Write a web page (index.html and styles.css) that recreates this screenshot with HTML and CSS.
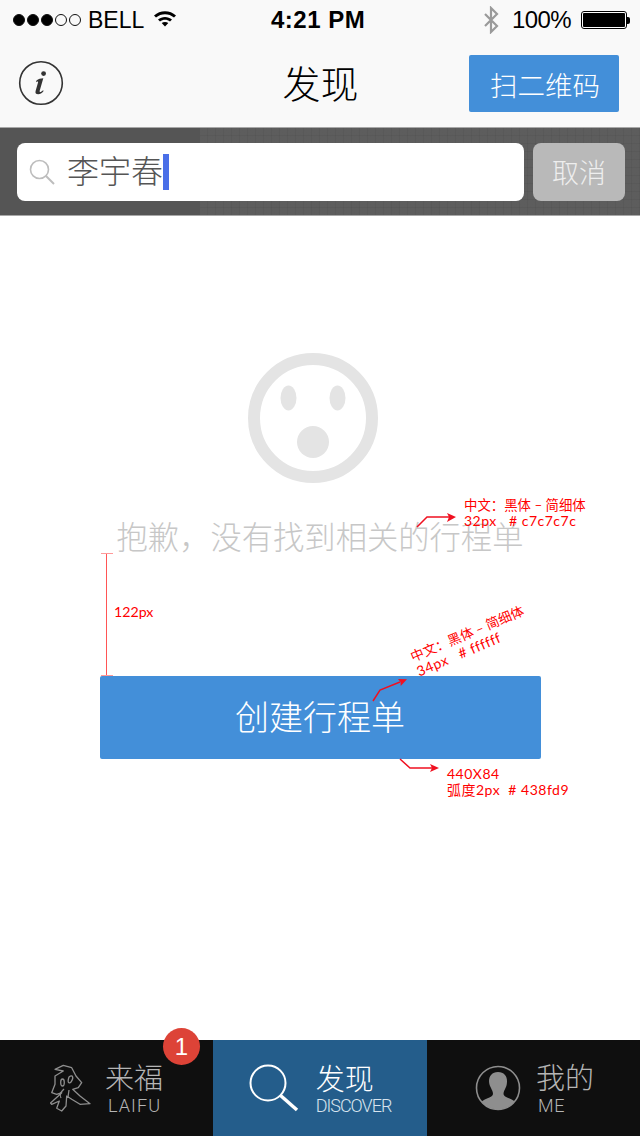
FILE: index.html
```html
<!DOCTYPE html>
<html lang="zh">
<head>
<meta charset="utf-8">
<title>发现</title>
<link rel="stylesheet" href="styles.css">
</head>
<body>
<div class="app">
  <header class="top">
    <div class="status">
      <div class="status-left">
        <span class="signal"><i class="on"></i><i class="on"></i><i class="on"></i><i></i><i></i></span>
        <span class="carrier">BELL</span>
        <svg class="wifi" width="24" height="18" viewBox="0 0 24 18"><path d="M1 6.5C7 .8 17 .8 23 6.5L21 8.6C16 4 8 4 3 8.6Z"/><path d="M5 10.5C9 7 15 7 19 10.5L17 12.5C14 10 10 10 7 12.5Z"/><path d="M8.7 14C10.6 12.6 13.4 12.6 15.3 14L12 17.6Z"/></svg>
      </div>
      <div class="time">4:21 PM</div>
      <div class="status-right">
        <svg class="bt" width="16" height="28" viewBox="0 0 16 28"><path d="M2 8l12 12-6 6V2l6 6L2 20" fill="none" stroke="#9a9a9a" stroke-width="2.2"/></svg>
        <span class="pct">100%</span>
        <span class="battery"><span class="battery-fill"></span></span><span class="battery-tip"></span>
      </div>
    </div>
    <nav class="nav">
      <svg class="info" width="46" height="46" viewBox="0 0 46 46"><circle cx="23" cy="23" r="21.3" fill="none" stroke="#333" stroke-width="1.6"/><circle cx="25.6" cy="13.6" r="2.4" fill="#333"/><path d="M18.5 20.5c2-1.6 4-2.3 6.8-2.3l-3.6 12.6c-.3 1.2.6 1.5 1.4 1l2-1.5.5.8c-1.7 2.2-3.5 3.2-5.4 3.2-2.2 0-3.2-1.2-2.6-3.3l2.5-8.7c.2-.8-.5-1-1.2-.6l-.9.6z" fill="#333"/></svg>
      <h1 class="title">发现</h1>
      <button class="scan">扫二维码</button>
    </nav>
  </header>

  <div class="searchbar">
    <div class="searchbox">
      <svg class="search-ico" width="26" height="26" viewBox="0 0 26 26"><circle cx="10.5" cy="10.5" r="9" fill="none" stroke="#bdbdbd" stroke-width="1.6"/><path d="M17 17l8 8" stroke="#bdbdbd" stroke-width="2"/></svg>
      <span class="query">李宇春</span><span class="caret"></span>
    </div>
    <button class="cancel">取消</button>
  </div>

  <main class="main">
    <svg class="face" width="130" height="130" viewBox="0 0 130 130"><circle cx="65" cy="65" r="59" fill="none" stroke="#e4e4e4" stroke-width="12"/><ellipse cx="40.500" cy="45" rx="8" ry="12.500" fill="#e4e4e4"/><ellipse cx="89.500" cy="45" rx="8" ry="12.500" fill="#e4e4e4"/><circle cx="65" cy="89" r="16" fill="#e4e4e4"/></svg>
    <p class="empty">抱歉，没有找到相关的行程单</p>
    <button class="create">创建行程单</button>

    <div class="ruler"></div>
    <span class="note note-122">122px</span>

    <svg class="arrows" width="640" height="824" viewBox="0 0 640 824">
      <g fill="none" stroke="#f01020" stroke-width="1.500">
        <path d="M417 311l10-10h22"/>
        <path d="M373 485l7-11 20-8"/>
        <path d="M400 543l10 9h22"/>
      </g>
      <g fill="#f01020">
        <path d="M456 301l-9-4 2 4-2 5z"/>
        <path d="M407 463.300l-9-.3 2.500 3 .2 4z"/>
        <path d="M439 552l-9-4 2 4-2 4z"/>
      </g>
    </svg>
    <div class="note note-a"><span>中文：黑体 – 简细体</span><span class="wide">32px &nbsp;&nbsp;# c7c7c7c</span></div>
    <div class="note note-b"><span>中文：黑体 – 简细体</span><span class="wide">34px &nbsp;&nbsp;# ffffff</span></div>
    <div class="note note-c"><span class="wide">440X84</span><span class="wide">弧度2px &nbsp;# 438fd9</span></div>
  </main>

  <footer class="tabs">
    <div class="tab tab-logo">
      <svg class="logo" width="42" height="50" viewBox="0 0 42 50"><g fill="none" stroke="#8e8e8e" stroke-width="1.300" stroke-linejoin="round"><path d="M13.300 2.300L21.700 4.700 26 13 31.700 19.700 28.300 24.700 22.700 26.300 30 33 40 40.700 30 41.300 21.700 36.300 16.700 33 16 43 11.700 48 6.700 45.300 9.300 38 1.700 41.300 0.500 40 8.300 33 11.700 29.700 6.700 31.300 1.700 29.700 5 21.300 5 13 13.300 8 5 6.300Z"/><ellipse cx="12.500" cy="19.500" rx="1.800" ry="3.500"/><path d="M19 14c4-3 5 1 2 5-2 2-4 1-2-5z"/><path d="M14 26c-3 3-5 5-3 9M19 27l-1 7"/></g></svg>
      <div class="tab-text"><span class="zh">来福</span><span class="en en-laifu">LAIFU</span></div>
      <span class="badge">1</span>
    </div>
    <div class="tab tab-active">
      <svg width="50" height="48" viewBox="0 0 50 48"><circle cx="19" cy="19" r="17.500" fill="none" stroke="#fff" stroke-width="2"/><path d="M31 31l17 15" stroke="#fff" stroke-width="3.500"/></svg>
      <div class="tab-text"><span class="zh zh-low">发现</span><span class="en en-tight">DISCOVER</span></div>
    </div>
    <div class="tab tab-me">
      <svg width="46" height="46" viewBox="0 0 46 46"><defs><clipPath id="c"><circle cx="23" cy="23" r="21.500"/></clipPath></defs><circle cx="23" cy="23" r="21.500" fill="none" stroke="#8e8e8e" stroke-width="1.600"/><path clip-path="url(#c)" d="M23 7c6 0 9 4 9 9 0 3-.5 5-1.500 7-.8 2-2 3.500-2 6 0 2 2.500 3 6 4.500 3 1.200 6 3 7 5l-5 7H10l-5-7c1-2 4-3.800 7-5 3.500-1.500 6-2.500 6-4.500 0-2.500-1.200-4-2-6C15 21 14 19 14 16c0-5 3-9 9-9z" fill="#8e8e8e"/></svg>
      <div class="tab-text"><span class="zh">我的</span><span class="en en-me">ME</span></div>
    </div>
  </footer>
</div>
</body>
</html>
```
FILE: styles.css
```css
* { box-sizing: border-box; }
html, body { margin: 0; padding: 0; background: #fff; }
body { font-family: "Liberation Sans", "Noto Sans CJK SC", sans-serif; }
.app { width: 640px; height: 1136px; display: flex; flex-direction: column; overflow: hidden; }
button { border: 0; padding: 0; font: inherit; }

.top { height: 128px; background: #f9f9f9; border-bottom: 1px solid #a8a8a8; }
.status { height: 40px; display: flex; align-items: center; justify-content: space-between; padding: 0 10px 0 13px; position: relative; color: #000; }
.status-left { display: flex; align-items: center; gap: 7px; }
.signal { display: flex; gap: 2px; }
.signal i { width: 12px; height: 12px; border-radius: 50%; border: 1px solid #111; }
.signal i.on { background: #000; }
.carrier { font-size: 23px; line-height: 28px; }
.wifi { margin-top: -4px; margin-left: 2px; fill: #000; }
.time { position: absolute; left: 271px; top: 5px; font-size: 24px; line-height: 30px; font-weight: 700; letter-spacing: .5px; }
.status-right { display: flex; align-items: center; }
.bt { margin-right: 13px; }
.pct { font-size: 24px; line-height: 28px; letter-spacing: -.6px; margin-right: 10px; }
.battery { width: 46px; height: 18px; border: 1px solid #000; border-radius: 3px; padding: 1px; display: block; background: #fff; }
.battery-fill { display: block; height: 100%; background: #000; border-radius: 1px; }
.battery-tip { width: 3px; height: 7px; background: #000; border-radius: 0 2px 2px 0; display: block; }

.nav { height: 87px; display: flex; align-items: center; justify-content: space-between; position: relative; padding: 0 21px 2px 18px; }
.title { position: absolute; left: 1px; right: 0; top: 18px; margin: 0; text-align: center; font-size: 38px; line-height: 54px; font-weight: 300; color: #000; pointer-events: none; }
.scan { width: 150px; height: 57px; margin-top: 2px; background: #438fd9; color: #fff; border-radius: 2px; font-size: 27.5px; font-weight: 300; padding-left: 2px; }

.searchbar {
  height: 88px; display: flex; align-items: center; gap: 9px; padding: 0 15px 0 17px; border-bottom: 1px solid #a8a8a8;
  background-color: #555;
  background-image:
    repeating-linear-gradient(90deg, rgba(255,255,255,.022) 0 7px, transparent 7px 8px),
    repeating-linear-gradient(0deg, rgba(255,255,255,.022) 0 7px, transparent 7px 8px);
  background-size: 440px 100%;
  background-position: right top;
  background-repeat: no-repeat;
}
.searchbox { width: 507px; height: 58px; background: #fff; border-radius: 8px; display: flex; align-items: center; padding-left: 12px; }
.search-ico { margin-right: 12px; }
.query { font-size: 32px; line-height: 40px; color: #555; font-weight: 300; }
.caret { width: 6px; height: 36px; background: #4a6fe8; }
.cancel { width: 92px; height: 58px; border-radius: 8px; background: #b9b9b9; color: #eee; font-size: 27px; font-weight: 300; }

.main { flex: 1; position: relative; display: flex; flex-direction: column; align-items: center; padding-top: 137px; }
.face { display: block; margin-right: 15px; }
.empty { margin: 34px 0 0; font-size: 31.3px; line-height: 44px; color: #c7c7c7; font-weight: 300; }
.create { width: 441px; height: 83px; margin-top: 115px; padding-bottom: 4px; background: #438fd9; color: #fff; border-radius: 2px; font-size: 34px; font-weight: 300; }

.ruler { position: absolute; left: 101px; top: 337px; width: 12px; height: 123px; border-top: 1px solid #f99; border-bottom: 1px solid #f99; }
.ruler::before { content: ""; position: absolute; left: 5px; top: 0; bottom: 0; width: 1px; background: #f55; }
.arrows { position: absolute; left: 0; top: 0; pointer-events: none; }
.note { position: absolute; color: #f00; font-size: 13.4px; line-height: 16px; font-weight: 400; font-family: "Lato", "Noto Sans CJK SC", sans-serif; }
.note span { display: block; white-space: nowrap; }
.note .wide { font-size: 14px; letter-spacing: .5px; line-height: 15.5px; }
.note-122 { left: 114px; top: 387px; font-size: 14.2px; line-height: 17px; }
.note-a { left: 464px; top: 281px; }
.note-b { left: 408px; top: 434px; transform: rotate(-23deg); transform-origin: left top; }
.note-c { left: 447px; top: 550px; }

.tabs { height: 96px; display: grid; grid-template-columns: 213px 214px 213px; background: #0f0f0f; color: #b5b5b5; }
.tab { position: relative; display: flex; align-items: center; justify-content: center; gap: 17px; }
.tab-logo { gap: 13px; }
.tab-me { gap: 15px; padding-left: 2px; }
.tab-active { background: #245d8b; color: #fff; }
.tab-text { display: flex; flex-direction: column; align-items: flex-start; }
.zh { font-size: 29px; line-height: 36px; font-weight: 300; }
.zh-low { padding-top: 1px; }
.en { font-family: "Roboto", "Liberation Sans", sans-serif; font-weight: 300; font-size: 18px; line-height: 20px; margin-top: -1px; letter-spacing: .6px; }
.en-laifu { margin-left: 3px; letter-spacing: 1.1px; }
.en-me { margin-left: 2px; }
.en-tight { letter-spacing: -1px; color: #d8e4ee; margin-top: -2px; }
.badge { position: absolute; left: 163px; top: -12px; width: 37px; height: 37px; border-radius: 50%; background: #dd4337; color: #fff; font-size: 24px; line-height: 37px; text-align: center; }
```
